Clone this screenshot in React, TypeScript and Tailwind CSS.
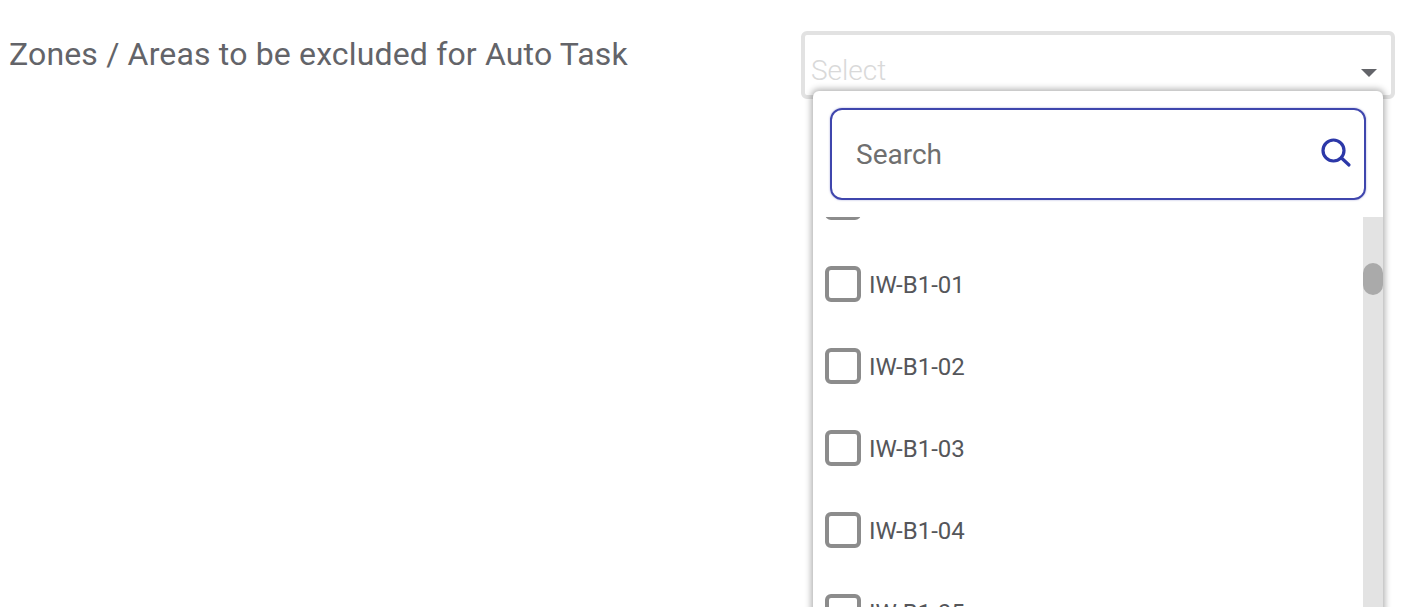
const items = ["", "IW-B1-01", "IW-B1-02", "IW-B1-03", "IW-B1-04", "IW-B1-05"]

export default function App() {
  return (
    <div className="flex h-[607px] items-start overflow-hidden bg-white pt-[31px] pl-[9px] font-['Roboto',sans-serif]">
      <div className="w-[792px] pt-[3px] text-[32px] leading-[40px] tracking-[0.16px] text-[#636469]">
        Zones / Areas to be excluded for Auto Task
      </div>

      <div className="relative w-[594px]">
        <div className="flex h-[68px] items-end justify-between rounded-md border-4 border-[#e2e2e2] bg-white pr-[14px] pl-[6px]">
          <span className="mb-[6px] text-[28px] leading-[36px] font-light text-[#d9d9d9]">Select</span>
          <span className="mb-[18px] h-0 w-0 border-x-[8px] border-t-[8px] border-x-transparent border-t-[#636469]" />
        </div>

        {/* dropdown panel */}
        <div className="absolute top-[60px] left-[12px] h-[560px] w-[570px] rounded-md bg-white shadow-[0_0_6px_2px_rgba(0,0,0,0.3)]">
          <div className="pt-[17px] pr-[17px] pl-[17px]">
            <div className="flex h-[92px] items-center justify-between rounded-xl border-2 border-[#3f46ad] pr-[11px] pl-[24px] shadow-[0_0_2px_rgba(63,70,173,0.5)]">
              <span className="translate-y-[1px] text-[28px] text-[#6f6f6f]">Search</span>
              <svg viewBox="0 0 34 34" className="h-[34px] w-[34px] text-[#2c38a8]" fill="none" stroke="currentColor" strokeWidth="3.2" strokeLinecap="round">
                <circle cx="14.5" cy="13.5" r="10.5" />
                <path d="M22.5 21 L30 28" />
              </svg>
            </div>
          </div>

          <div className="mt-[17px] flex h-[450px]">
            <div className="h-full flex-1 overflow-hidden">
              <div className="-mt-[56px]">
                {items.map((item, i) => (
                  <div key={i} className="flex h-[82px] items-center gap-[8px] pl-[12px]">
                    <span className="h-[36px] w-[36px] rounded-md border-4 border-[#8c8c8c] bg-white" />
                    <span className="translate-y-[1px] text-[24px] leading-none text-[#55565a]">{item}</span>
                  </div>
                ))}
              </div>
            </div>
            <div className="h-full w-[20px] bg-[#e3e3e3] pt-[46px]">
              <div className="h-[32px] w-[20px] rounded-[10px] bg-[#aaaaaa]" />
            </div>
          </div>
        </div>
      </div>
    </div>
  )
}
